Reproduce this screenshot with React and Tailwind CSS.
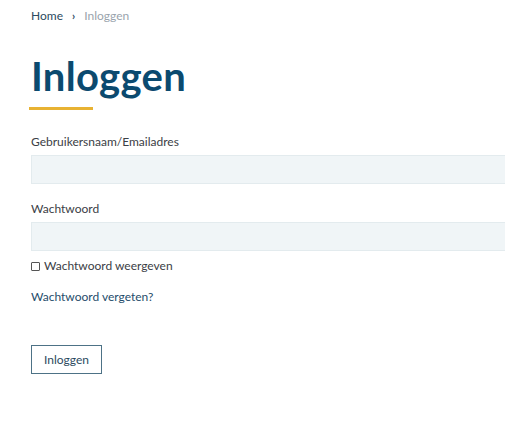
import React, { useState } from 'react';

const App = () => {
  const [show, setShow] = useState(false);

  return (
    <div className="w-full min-h-[423px] overflow-hidden bg-white font-['Lato',sans-serif]">
      <div className="w-[560px] pl-[31px] pt-[8px]">
        <nav className="flex items-center gap-[9px] text-[12px] leading-[16px]">
          <span className="text-[#2c4a60]">Home</span>
          <span className="text-[#2c4a60] text-[11px] font-bold">›</span>
          <span className="text-[#9aa4ad]">Inloggen</span>
        </nav>

        <h1 className="mt-[28px] text-[40px] leading-[48px] font-bold text-[#0b4a6f] tracking-[0.3px]">Inloggen</h1>
        <div className="mt-[7px] -ml-[2px] w-[64px] h-[3px] bg-[#e8b232]"></div>

        <form className="mt-[24px]">
          <label className="block text-[12px] leading-[16px] text-[#3b4045]">Gebruikersnaam/Emailadres</label>
          <input
            type="text"
            className="mt-[5px] block w-full h-[29px] bg-[#f0f5f7] border border-[#e3ebee] outline-none"
          />

          <label className="mt-[17px] block text-[12px] leading-[16px] text-[#3b4045]">Wachtwoord</label>
          <input
            type={show ? 'text' : 'password'}
            className="mt-[5px] block w-full h-[29px] bg-[#f0f5f7] border border-[#e3ebee] outline-none"
          />

          <label
            className="mt-[7px] flex items-center gap-[4px] text-[12px] leading-[16px] text-[#3b4045]"
            onClick={() => setShow(!show)}
          >
            <span className="w-[9px] h-[9px] border border-[#555] rounded-[1px] inline-block"></span>
            Wachtwoord weergeven
          </label>

          <a className="mt-[15px] block text-[12px] leading-[16px] text-[#1f4d6b]">Wachtwoord vergeten?</a>

          <button
            type="button"
            className="mt-[40px] h-[29px] px-[12px] border border-[#4d7286] text-[12px] text-[#2c4a60]"
          >
            Inloggen
          </button>
        </form>
      </div>
    </div>
  );
};

export default App;
